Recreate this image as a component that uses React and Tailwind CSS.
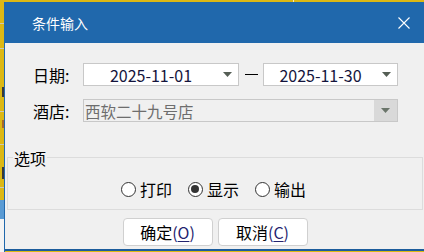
import React from "react";

const font = { fontFamily: '"Noto Sans CJK SC", "Noto Sans", sans-serif' };

function Arrow({ color = "#555e55" }) {
  return (
    <svg width="9" height="5" viewBox="0 0 9 5">
      <path d="M0 0 H9 L4.5 5 Z" fill={color} />
    </svg>
  );
}

function Radio({ checked, label }) {
  return (
    <div className="flex items-center gap-[4px]">
      <div className="w-[15px] h-[15px] rounded-full border border-[#333333] bg-white flex items-center justify-center">
        {checked && <div className="w-[8px] h-[8px] rounded-full bg-[#333333]" />}
      </div>
      <span className="text-[16px] leading-[16px] text-black">{label}</span>
    </div>
  );
}

function Btn({ label, k }) {
  return (
    <div className="w-[90px] h-[28px] bg-white border border-[#d0d0d0] rounded-[4px] flex items-center justify-center text-[16px] leading-[16px] text-black">
      <span>{label}</span>
      <span className="text-[#23236e]">
        (<span className="underline underline-offset-[2px]">{k}</span>)
      </span>
    </div>
  );
}

export default function App() {
  return (
    <div className="w-[424px] h-[252px] overflow-hidden bg-[#dcb814] flex flex-col" style={font}>
      {/* top strip */}
      <div className="h-[2px] flex">
        <div className="w-[293px]" />
        <div className="w-[1px] bg-[#f2e9c0]" />
      </div>
      <div className="flex h-[250px]">
        {/* left strip */}
        <div className="w-[4px] flex flex-col">
          <div className="h-[21px]" />
          <div className="h-[1px] bg-[#cfc9b0]" />
          <div className="h-[24px]" />
          <div className="h-[1px] bg-[#cfc9b0]" />
          <div className="h-[38px]" />
          <div className="h-[10px] flex justify-end"><div className="w-[2px] bg-[#3a3a3a]" /></div>
          <div className="h-[14px]" />
          <div className="h-[1px] bg-[#cfc9b0]" />
          <div className="h-[8px]" />
          <div className="h-[8px] flex justify-end"><div className="w-[2px] bg-[#a86a2a]" /></div>
          <div className="h-[16px]" />
          <div className="h-[1px] bg-[#cfc9b0]" />
          <div className="h-[22px]" />
          <div className="h-[12px] flex justify-end"><div className="w-[2px] bg-[#3a3a3a]" /></div>
          <div className="h-[8px]" />
          <div className="h-[1px] bg-[#cfc9b0]" />
          <div className="h-[12px]" />
          <div className="h-[19px] bg-[#5a9bd4]" />
          <div className="flex-1 bg-[#f4f4f4]" />
        </div>
        {/* window */}
        <div className="flex-1 flex flex-col border-l border-[#2068ac]">
          <div className="h-[41px] bg-[#2068ac] flex items-center justify-between pl-[27px] pr-[14px]">
            <span className="text-white text-[14px] leading-[14px] mt-[1px]">条件输入</span>
            <svg width="12" height="12" viewBox="0 0 12 12">
              <path d="M0.5 0.5 L11.5 11.5 M11.5 0.5 L0.5 11.5" stroke="white" strokeWidth="1.1" />
            </svg>
          </div>
          <div className="h-[206px] bg-[#f0f0f0] flex flex-col pt-[20px]">
            {/* date row */}
            <div className="flex items-center pl-[28px] h-[23px]">
              <span className="w-[50px] text-[16px] leading-[16px] text-black">日期:</span>
              <div className="w-[156px] h-[23px] bg-white border border-[#c8c8c8] flex items-center">
                <span className="flex-1 text-center text-[16px] leading-[16px] text-[#14143c] pl-[2px]">2025-11-01</span>
                <div className="w-[22px] flex justify-center"><Arrow /></div>
              </div>
              <div className="w-[24px] flex justify-center">
                <div className="w-[13px] h-[1px] bg-black" />
              </div>
              <div className="w-[135px] h-[23px] bg-white border border-[#c8c8c8] flex items-center">
                <span className="flex-1 text-center text-[16px] leading-[16px] text-[#14143c] pl-[2px]">2025-11-30</span>
                <div className="w-[22px] flex justify-center"><Arrow /></div>
              </div>
            </div>
            {/* hotel row */}
            <div className="flex items-center pl-[28px] h-[23px] mt-[13px]">
              <span className="w-[50px] text-[16px] leading-[16px] text-black">酒店:</span>
              <div className="w-[315px] h-[23px] border border-[#c8c8c8] flex">
                <span className="flex-1 flex items-center pl-[1px] text-[15.5px] leading-[16px] text-[#6d6d6d]">西软二十九号店</span>
                <div className="w-[23px] bg-[#d9d9d9] flex items-center justify-center"><Arrow color="#6a756a" /></div>
              </div>
            </div>
            {/* group box */}
            <div className="relative mt-[35px] ml-[2px] mr-[1px] h-[53px] border border-[#dcdcdc]">
              <span className="absolute left-[5px] top-[-8px] px-[1px] bg-[#f0f0f0] text-[16px] leading-[16px] text-black">选项</span>
              <div className="flex justify-center gap-[16px] mt-[23px] ml-[-3px]">
                <Radio label="打印" />
                <Radio label="显示" checked />
                <Radio label="输出" />
              </div>
            </div>
            {/* buttons */}
            <div className="flex justify-center gap-[5px] mt-[8px] ml-[1px]">
              <Btn label="确定" k="O" />
              <Btn label="取消" k="C" />
            </div>
          </div>
          <div className="h-[2px] bg-[#1c5c9c]" />
        </div>
      </div>
    </div>
  );
}
